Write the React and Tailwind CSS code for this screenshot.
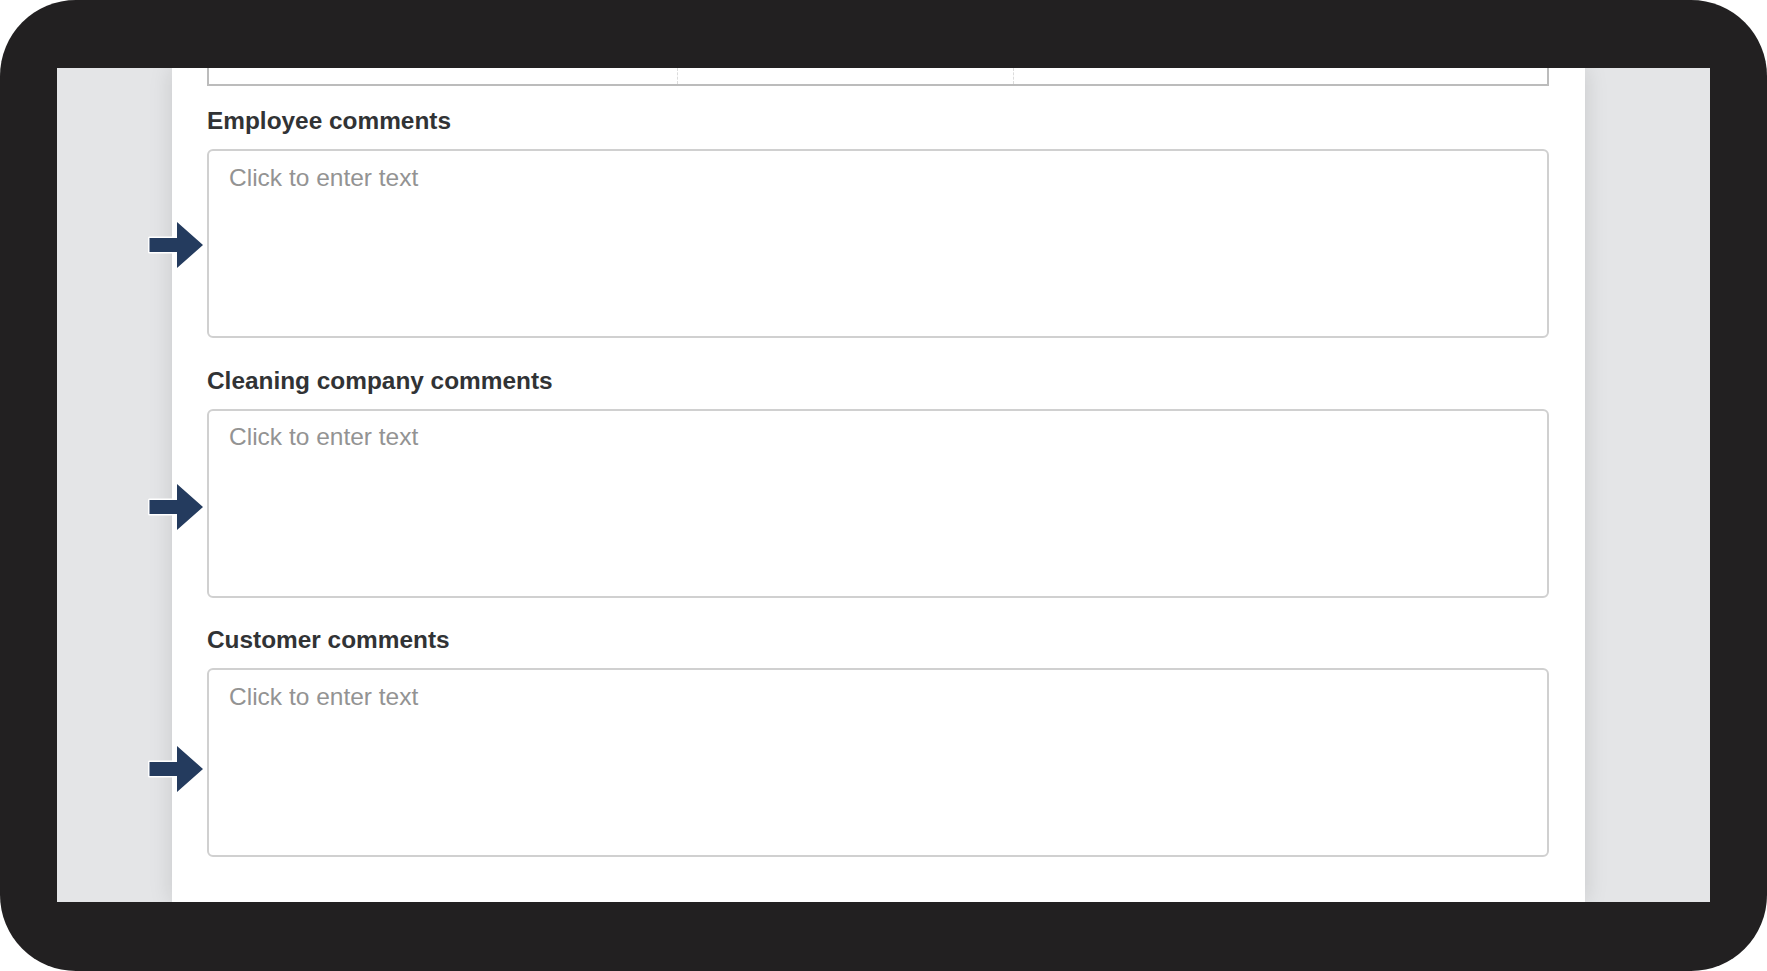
import React from "react";

function Arrow({ top }) {
  return (
    <svg
      width="62"
      height="54"
      viewBox="0 0 62 54"
      className="absolute left-[-62px]"
      style={{ top }}
    >
      <path
        d="M4.5 20 L32 20 L32 4 L58 27 L32 50 L32 34 L4.5 34 Z"
        fill="#243b5e"
        stroke="#ffffff"
        strokeWidth="3"
        strokeLinejoin="round"
        paintOrder="stroke"
      />
    </svg>
  );
}

function Section({ label, className, arrowTop }) {
  return (
    <div className={"relative flex flex-col " + className}>
      <Arrow top={arrowTop} />
      <div className="h-[28px] leading-[28px] text-[24.4px] font-bold text-[#313335] whitespace-nowrap">
        {label}
      </div>
      <textarea
        placeholder="Click to enter text"
        className="mt-[14px] h-[189px] w-full resize-none rounded-[6px] border-2 border-[#d0d0d0] bg-white px-[20px] pt-[12.5px] text-[24.5px] leading-[28px] text-[#333] outline-none placeholder:text-[#939393]"
        style={{ fontFamily: '"Liberation Sans", Arial, sans-serif' }}
      />
    </div>
  );
}

export default function App() {
  return (
    <div
      className="w-[1767px] h-[971px] bg-white"
      style={{ fontFamily: '"Liberation Sans", Arial, Helvetica, sans-serif' }}
    >
      <div className="w-full h-full rounded-[76px] bg-[#222021] pt-[68px] pb-[69px] px-[57px]">
        <div className="h-full w-full bg-[#e4e5e7] overflow-hidden">
          <div className="ml-[115px] w-[1413px] h-full bg-white shadow-[0_0_22px_rgba(0,0,0,0.13)] pl-[35px] pr-[36px] flex flex-col">
            <div className="h-[18px] border-x-2 border-b-[2px] border-[#bcbcbc] flex shrink-0">
              <div className="w-[469px] border-r border-dashed border-[#dcdcdc]" />
              <div className="w-[336px] border-r border-dashed border-[#dcdcdc]" />
              <div className="flex-1" />
            </div>
            <Section label="Employee comments" className="mt-[21px]" arrowTop={111} />
            <Section label="Cleaning company comments" className="mt-[28.5px]" arrowTop={113} />
            <Section label="Customer comments" className="mt-[28.5px]" arrowTop={115.5} />
          </div>
        </div>
      </div>
    </div>
  );
}
